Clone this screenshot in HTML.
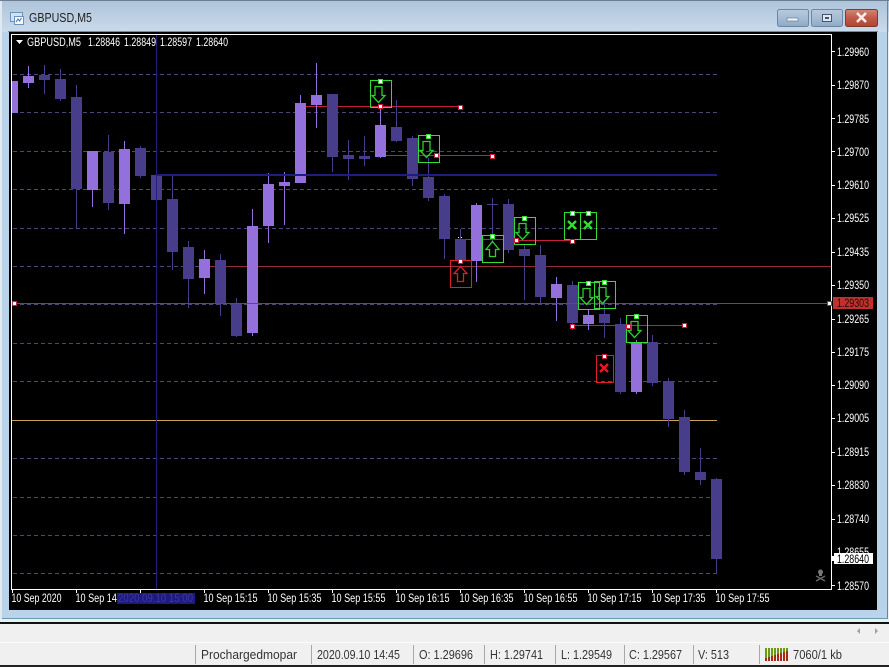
<!DOCTYPE html>
<html>
<head>
<meta charset="utf-8">
<title>GBPUSD,M5</title>
<style>
html,body{margin:0;padding:0;background:#f0f0f0;width:889px;height:667px;overflow:hidden}
svg{display:block}
text{font-family:"Liberation Sans",sans-serif;font-size:11.5px;fill:#fff}
.s{shape-rendering:crispEdges}
.l{fill:#9370db}
.d{fill:#483d8b}
.st text{fill:#333;font-size:12.5px}
.h{fill:#fff;stroke-width:1}
.hg{stroke:#33e033}
.hr{stroke:#c81e3c}
.bg{fill:none;stroke:#33dc33}
.br{fill:none;stroke:#dc1f2a}
.ag{fill:none;stroke:#2cd02c;stroke-width:1.300}
.ar{fill:none;stroke:#dc1f2a;stroke-width:1.300}
</style>
</head>
<body>
<svg width="889" height="667" viewBox="0 0 889 667" xmlns="http://www.w3.org/2000/svg">
<defs>
<linearGradient id="tb" x1="0" y1="0" x2="0" y2="1"><stop offset="0" stop-color="#aec3d9"/><stop offset="1" stop-color="#c9dbec"/></linearGradient>
<linearGradient id="btn" x1="0" y1="0" x2="0" y2="1"><stop offset="0" stop-color="#b9cadc"/><stop offset=".5" stop-color="#a5bcd4"/><stop offset="1" stop-color="#8fa9c6"/></linearGradient>
<linearGradient id="cls" x1="0" y1="0" x2="0" y2="1"><stop offset="0" stop-color="#d08678"/><stop offset=".5" stop-color="#c05a48"/><stop offset="1" stop-color="#b04432"/></linearGradient>
</defs>

<!-- window chrome -->
<g class="s">
<rect x="0" y="0" width="889" height="667" fill="#f0f0f0"/>
<rect x="0" y="0" width="889" height="32" fill="url(#tb)"/>
<rect x="0" y="0" width="889" height="1" fill="#6c7f92"/>
<rect x="0" y="1" width="2" height="618" fill="#dfe9f2"/>
<rect x="2" y="32" width="7" height="586" fill="#b8d2ea"/>
<rect x="877" y="32" width="10" height="586" fill="#b8d2ea"/>
<rect x="887" y="1" width="1" height="618" fill="#5f8a9e"/>
<rect x="2" y="610" width="885" height="8" fill="#b9d3ea"/>
<rect x="2" y="618" width="886" height="1" fill="#6a9bab"/>
<rect x="0" y="619" width="889" height="3" fill="#e8f0f5"/>
<rect x="0" y="622" width="889" height="2" fill="#111"/>
<rect x="0" y="642" width="889" height="1" fill="#fbfbfb"/>
<rect x="0" y="665" width="889" height="2" fill="#222"/>
<rect x="8" y="31" width="870" height="1" fill="#7c8894"/>
<rect x="9" y="32" width="868" height="578" fill="#000"/>
</g>

<!-- title icon -->
<g class="s">
<rect x="10.500" y="12.500" width="12" height="9" fill="#cfe2f5" stroke="#6f93b8"/>
<rect x="14.500" y="16.500" width="9" height="8" fill="#f4f8fc" stroke="#6f93b8"/>
</g>
<path d="M16 22l2-3 1.500 2 2-3" fill="none" stroke="#4a76a8"/>
<text x="29" y="22" textLength="63" lengthAdjust="spacingAndGlyphs" style="fill:#222;font-size:12.500px">GBPUSD,M5</text>

<!-- window buttons -->
<rect x="777.500" y="9.500" width="31" height="17" rx="2" fill="url(#btn)" stroke="#6d86a3"/>
<rect x="787" y="18" width="11" height="3" fill="#eef3f8" stroke="#5d7088" stroke-width=".6"/>
<rect x="811.500" y="9.500" width="31" height="17" rx="2" fill="url(#btn)" stroke="#6d86a3"/>
<rect x="822.500" y="14.500" width="9" height="7" fill="#dde7f1" stroke="#45566b"/>
<rect x="825" y="17" width="4" height="2" fill="#45566b"/>
<rect x="845.500" y="9.500" width="32" height="17" rx="2" fill="url(#cls)" stroke="#7c3a30"/>
<path d="M857 13l9 9M866 13l-9 9" stroke="#f7eeee" stroke-width="2.600" fill="none"/>

<!-- chart frame -->
<g class="s">
<rect x="11" y="34" width="821" height="1" fill="#fff"/>
<rect x="11" y="34" width="1" height="556" fill="#fff"/>
<rect x="831" y="34" width="1" height="556" fill="#fff"/>
<rect x="11" y="589" width="821" height="1" fill="#fff"/>
</g>

<!-- grid -->
<g class="s" stroke="#4d4775" stroke-dasharray="4 3" fill="none">
<path d="M13 74.500H717M13 112.500H717M13 151.500H717M13 189.500H717M13 228.500H717M13 304.500H717M13 343.500H717M13 381.500H717M13 458.500H717M13 497.500H717M13 535.500H717M13 573.500H717M13 266.500H717"/>
</g>

<!-- background horizontal lines -->
<g class="s">
<rect x="210" y="266" width="621" height="1" fill="#9a2a40"/>
<rect x="12" y="420" width="705" height="1" fill="#c6a452"/>
</g>

<!-- trend lines behind candles -->
<g class="s" fill="#c81e3c">
<rect x="305" y="106" width="155" height="1"/>
<rect x="380" y="155" width="112" height="1"/>
<rect x="460" y="239" width="56" height="1"/>
<rect x="516" y="240" width="56" height="1"/>
<rect x="572" y="325" width="112" height="1"/>
</g>

<!-- candles light -->
<g class="s l">
<rect x="12" y="81" width="6" height="32"/>
<rect x="28" y="66" width="1" height="22"/><rect x="23" y="76" width="11" height="7"/>
<rect x="92" y="151" width="1" height="56"/><rect x="87" y="151" width="11" height="39"/>
<rect x="124" y="141" width="1" height="93"/><rect x="119" y="149" width="11" height="55"/>
<rect x="204" y="250" width="1" height="44"/><rect x="199" y="259" width="11" height="19"/>
<rect x="252" y="209" width="1" height="127"/><rect x="247" y="226" width="11" height="107"/>
<rect x="268" y="173" width="1" height="70"/><rect x="263" y="184" width="11" height="42"/>
<rect x="284" y="172" width="1" height="53"/><rect x="279" y="182" width="11" height="4"/>
<rect x="300" y="95" width="1" height="88"/><rect x="295" y="103" width="11" height="80"/>
<rect x="316" y="63" width="1" height="65"/><rect x="311" y="95" width="11" height="10"/>
<rect x="380" y="106" width="1" height="52"/><rect x="375" y="125" width="11" height="32"/>
<rect x="476" y="203" width="1" height="79"/><rect x="471" y="205" width="11" height="56"/>
<rect x="556" y="277" width="1" height="44"/><rect x="551" y="284" width="11" height="14"/>
<rect x="588" y="309" width="1" height="21"/><rect x="583" y="315" width="11" height="9"/>
<rect x="636" y="340" width="1" height="54"/><rect x="631" y="342" width="11" height="50"/>
</g>
<g class="s d">
<rect x="44" y="65" width="1" height="29"/><rect x="39" y="75" width="11" height="5"/>
<rect x="60" y="69" width="1" height="32"/><rect x="55" y="79" width="11" height="20"/>
<rect x="76" y="85" width="1" height="143"/><rect x="71" y="97" width="11" height="92"/>
<rect x="108" y="135" width="1" height="75"/><rect x="103" y="152" width="11" height="51"/>
<rect x="140" y="146" width="1" height="32"/><rect x="135" y="148" width="11" height="28"/>
<rect x="151" y="175" width="11" height="25"/>
<rect x="172" y="176" width="1" height="94"/><rect x="167" y="199" width="11" height="53"/>
<rect x="188" y="241" width="1" height="67"/><rect x="183" y="247" width="11" height="32"/>
<rect x="220" y="254" width="1" height="62"/><rect x="215" y="260" width="11" height="44"/>
<rect x="236" y="298" width="1" height="39"/><rect x="231" y="303" width="11" height="33"/>
<rect x="332" y="94" width="1" height="78"/><rect x="327" y="94" width="11" height="63"/>
<rect x="348" y="140" width="1" height="40"/><rect x="343" y="155" width="11" height="4"/>
<rect x="364" y="136" width="1" height="30"/><rect x="359" y="156" width="11" height="3"/>
<rect x="396" y="100" width="1" height="42"/><rect x="391" y="127" width="11" height="14"/>
<rect x="412" y="136" width="1" height="50"/><rect x="407" y="138" width="11" height="41"/>
<rect x="428" y="158" width="1" height="43"/><rect x="423" y="177" width="11" height="21"/>
<rect x="444" y="194" width="1" height="65"/><rect x="439" y="196" width="11" height="43"/>
<rect x="460" y="229" width="1" height="33"/><rect x="455" y="239" width="11" height="21"/>
<rect x="492" y="198" width="1" height="45"/><rect x="487" y="204" width="11" height="1"/>
<rect x="508" y="199" width="1" height="54"/><rect x="503" y="204" width="11" height="46"/>
<rect x="524" y="244" width="1" height="56"/><rect x="519" y="249" width="11" height="7"/>
<rect x="540" y="245" width="1" height="60"/><rect x="535" y="255" width="11" height="42"/>
<rect x="572" y="281" width="1" height="49"/><rect x="567" y="285" width="11" height="38"/>
<rect x="604" y="300" width="1" height="38"/><rect x="599" y="314" width="11" height="9"/>
<rect x="620" y="318" width="1" height="76"/><rect x="615" y="324" width="11" height="68"/>
<rect x="652" y="335" width="1" height="51"/><rect x="647" y="342" width="11" height="41"/>
<rect x="668" y="378" width="1" height="49"/><rect x="663" y="381" width="11" height="38"/>
<rect x="684" y="410" width="1" height="65"/><rect x="679" y="417" width="11" height="55"/>
<rect x="700" y="448" width="1" height="37"/><rect x="695" y="472" width="11" height="8"/>
<rect x="716" y="478" width="1" height="96"/><rect x="711" y="479" width="11" height="80"/>
</g>

<!-- crosshair and overlay lines -->
<g class="s">
<rect x="156" y="35" width="1" height="554" fill="#241f7c"/>
<rect x="156" y="174" width="561" height="2" fill="#1e1e80"/>
<rect x="12" y="303" width="819" height="1" fill="#b42a3c"/>
</g>

<!-- signal boxes -->
<g class="s">
<rect x="370.500" y="80.500" width="21" height="27" class="bg"/>
<rect x="418.500" y="135.500" width="21" height="27" class="bg"/>
<rect x="482.500" y="235.500" width="21" height="27" class="bg"/>
<rect x="514.500" y="217.500" width="21" height="27" class="bg"/>
<rect x="564.500" y="212.500" width="16" height="27" class="bg"/>
<rect x="580.500" y="212.500" width="16" height="27" class="bg"/>
<rect x="578.500" y="282.500" width="21" height="27" class="bg"/>
<rect x="594.500" y="281.500" width="21" height="27" class="bg"/>
<rect x="626.500" y="315.500" width="21" height="27" class="bg"/>
<rect x="450.500" y="260.500" width="21" height="27" class="br"/>
<rect x="596.500" y="355.500" width="17" height="27" class="br"/>
</g>

<!-- arrows -->
<path class="ag" d="M375 86.500h7v9h3l-6.500 7-6.500-7h3z"/>
<path class="ag" d="M423 141.500h7v9h3l-6.500 7-6.500-7h3z"/>
<path class="ag" d="M519 223.500h7v9h3l-6.500 7-6.500-7h3z"/>
<path class="ag" d="M583 288.500h7v9h3l-6.500 7-6.500-7h3z"/>
<path class="ag" d="M599 287.500h7v9h3l-6.500 7-6.500-7h3z"/>
<path class="ag" d="M631 321.500h7v9h3l-6.500 7-6.500-7h3z"/>
<path class="ag" d="M489.500 256.500v-7h-3.500l6.500-8 6.500 8h-3.500v7z"/>
<path class="ar" d="M457.500 281.500v-8h-3.500l6.500-7 6.500 7h-3.500v8z"/>

<!-- crosses -->
<path d="M568 221l8 8M576 221l-8 8" stroke="#2ee02e" stroke-width="2.400" fill="none"/>
<path d="M584 221l8 8M592 221l-8 8" stroke="#2ee02e" stroke-width="2.400" fill="none"/>
<path d="M600 364l8 8M608 364l-8 8" stroke="#f0141e" stroke-width="2.400" fill="none"/>

<!-- handles -->
<g class="s">
<g class="h hg">
<rect x="378.500" y="79.500" width="4" height="4"/>
<rect x="426.500" y="134.500" width="4" height="4"/>
<rect x="490.500" y="234.500" width="4" height="4"/>
<rect x="522.500" y="216.500" width="4" height="4"/>
<rect x="570.500" y="211.500" width="4" height="4"/>
<rect x="586.500" y="211.500" width="4" height="4"/>
<rect x="586.500" y="281.500" width="4" height="4"/>
<rect x="602.500" y="280.500" width="4" height="4"/>
<rect x="634.500" y="314.500" width="4" height="4"/>
</g>
<g class="h hr">
<rect x="378.500" y="104.500" width="4" height="4"/>
<rect x="458.500" y="105.500" width="4" height="4"/>
<rect x="434.500" y="153.500" width="4" height="4"/>
<rect x="490.500" y="154.500" width="4" height="4"/>
<rect x="514.500" y="238.500" width="4" height="4"/>
<rect x="570.500" y="239.500" width="4" height="4"/>
<rect x="570.500" y="324.500" width="4" height="4"/>
<rect x="626.500" y="324.500" width="4" height="4"/>
<rect x="682.500" y="323.500" width="4" height="4"/>
<rect x="458.500" y="259.500" width="4" height="4"/>
<rect x="602.500" y="354.500" width="4" height="4"/>
<rect x="12.500" y="301.500" width="4" height="4"/>
<rect x="827.500" y="301.500" width="4" height="4"/>
</g>
<rect x="458" y="237" width="1" height="1" fill="#fff"/>
<rect x="461" y="237" width="1" height="1" fill="#fff"/>
</g>

<!-- chart header -->
<path d="M16 40h7l-3.500 4z" fill="#fff"/>
<text x="27" y="46" textLength="54" lengthAdjust="spacingAndGlyphs">GBPUSD,M5</text>
<text x="88" y="46" textLength="32" lengthAdjust="spacingAndGlyphs">1.28846</text>
<text x="124" y="46" textLength="32" lengthAdjust="spacingAndGlyphs">1.28849</text>
<text x="160" y="46" textLength="32" lengthAdjust="spacingAndGlyphs">1.28597</text>
<text x="196" y="46" textLength="32" lengthAdjust="spacingAndGlyphs">1.28640</text>

<!-- price axis -->
<g class="s" fill="#fff">
<rect x="832" y="51" width="3" height="1"/><rect x="832" y="85" width="3" height="1"/><rect x="832" y="118" width="3" height="1"/><rect x="832" y="151" width="3" height="1"/><rect x="832" y="185" width="3" height="1"/><rect x="832" y="218" width="3" height="1"/><rect x="832" y="252" width="3" height="1"/><rect x="832" y="285" width="3" height="1"/><rect x="832" y="319" width="3" height="1"/><rect x="832" y="352" width="3" height="1"/><rect x="832" y="385" width="3" height="1"/><rect x="832" y="418" width="3" height="1"/><rect x="832" y="452" width="3" height="1"/><rect x="832" y="485" width="3" height="1"/><rect x="832" y="519" width="3" height="1"/><rect x="832" y="585" width="3" height="1"/>
</g>
<g>
<text x="837" y="56" textLength="32" lengthAdjust="spacingAndGlyphs">1.29960</text>
<text x="837" y="89" textLength="32" lengthAdjust="spacingAndGlyphs">1.29870</text>
<text x="837" y="123" textLength="32" lengthAdjust="spacingAndGlyphs">1.29785</text>
<text x="837" y="156" textLength="32" lengthAdjust="spacingAndGlyphs">1.29700</text>
<text x="837" y="189" textLength="32" lengthAdjust="spacingAndGlyphs">1.29610</text>
<text x="837" y="222" textLength="32" lengthAdjust="spacingAndGlyphs">1.29525</text>
<text x="837" y="256" textLength="32" lengthAdjust="spacingAndGlyphs">1.29435</text>
<text x="837" y="289" textLength="32" lengthAdjust="spacingAndGlyphs">1.29350</text>
<text x="837" y="323" textLength="32" lengthAdjust="spacingAndGlyphs">1.29265</text>
<text x="837" y="356" textLength="32" lengthAdjust="spacingAndGlyphs">1.29175</text>
<text x="837" y="389" textLength="32" lengthAdjust="spacingAndGlyphs">1.29090</text>
<text x="837" y="422" textLength="32" lengthAdjust="spacingAndGlyphs">1.29005</text>
<text x="837" y="456" textLength="32" lengthAdjust="spacingAndGlyphs">1.28915</text>
<text x="837" y="489" textLength="32" lengthAdjust="spacingAndGlyphs">1.28830</text>
<text x="837" y="523" textLength="32" lengthAdjust="spacingAndGlyphs">1.28740</text>
<text x="837" y="556" textLength="32" lengthAdjust="spacingAndGlyphs">1.28655</text>
<text x="837" y="590" textLength="32" lengthAdjust="spacingAndGlyphs">1.28570</text>
</g>
<rect class="s" x="833" y="297" width="40" height="12" fill="#c0302e"/>
<text x="837" y="307" textLength="32" lengthAdjust="spacingAndGlyphs" style="fill:#2a0a0a">1.29303</text>
<rect class="s" x="834" y="553" width="39" height="11" fill="#fff"/>
<rect class="s" x="832" y="556" width="2" height="5" fill="#fff"/>
<text x="837" y="563" textLength="32" lengthAdjust="spacingAndGlyphs" style="fill:#000">1.28640</text>

<!-- skull -->
<circle cx="820.500" cy="572" r="2.500" fill="#777"/>
<rect class="s" x="819" y="574" width="3" height="2" fill="#777"/>
<path d="M816 576l9 5M825 576l-9 5" stroke="#6a6a6a" stroke-width="1.300" fill="none"/>

<!-- time axis -->
<g class="s" fill="#fff">
<rect x="12" y="590" width="1" height="3"/><rect x="76" y="590" width="1" height="3"/><rect x="140" y="590" width="1" height="3"/><rect x="204" y="590" width="1" height="3"/><rect x="268" y="590" width="1" height="3"/><rect x="332" y="590" width="1" height="3"/><rect x="396" y="590" width="1" height="3"/><rect x="460" y="590" width="1" height="3"/><rect x="524" y="590" width="1" height="3"/><rect x="588" y="590" width="1" height="3"/><rect x="652" y="590" width="1" height="3"/><rect x="716" y="590" width="1" height="3"/>
</g>
<text x="11.500" y="602" textLength="50" lengthAdjust="spacingAndGlyphs">10 Sep 2020</text>
<text x="75.500" y="602" textLength="54" lengthAdjust="spacingAndGlyphs">10 Sep 14:55</text>
<rect class="s" x="117" y="593" width="78" height="11" fill="#1e1a80"/>
<text x="118" y="602" textLength="75" lengthAdjust="spacingAndGlyphs" style="fill:#3a3aa0">2020.09.10 15:00</text>
<text x="203.500" y="602" textLength="54" lengthAdjust="spacingAndGlyphs">10 Sep 15:15</text>
<text x="267.500" y="602" textLength="54" lengthAdjust="spacingAndGlyphs">10 Sep 15:35</text>
<text x="331.500" y="602" textLength="54" lengthAdjust="spacingAndGlyphs">10 Sep 15:55</text>
<text x="395.500" y="602" textLength="54" lengthAdjust="spacingAndGlyphs">10 Sep 16:15</text>
<text x="459.500" y="602" textLength="54" lengthAdjust="spacingAndGlyphs">10 Sep 16:35</text>
<text x="523.500" y="602" textLength="54" lengthAdjust="spacingAndGlyphs">10 Sep 16:55</text>
<text x="587.500" y="602" textLength="54" lengthAdjust="spacingAndGlyphs">10 Sep 17:15</text>
<text x="651.500" y="602" textLength="54" lengthAdjust="spacingAndGlyphs">10 Sep 17:35</text>
<text x="715.500" y="602" textLength="54" lengthAdjust="spacingAndGlyphs">10 Sep 17:55</text>

<!-- scroll arrows -->
<path d="M860 628v6l-3-3z" fill="#a0a0a0"/>
<path d="M875 628v6l3-3z" fill="#a0a0a0"/>

<!-- status bar -->
<g class="s" fill="#a8a8a8">
<rect x="195" y="645" width="1" height="19"/><rect x="311" y="645" width="1" height="19"/><rect x="413" y="645" width="1" height="19"/><rect x="484" y="645" width="1" height="19"/><rect x="555" y="645" width="1" height="19"/><rect x="624" y="645" width="1" height="19"/><rect x="693" y="645" width="1" height="19"/><rect x="759" y="645" width="1" height="19"/>
</g>
<g class="st">
<text x="201" y="659" textLength="96" lengthAdjust="spacingAndGlyphs">Prochargedmopar</text>
<text x="317" y="659" textLength="83" lengthAdjust="spacingAndGlyphs">2020.09.10 14:45</text>
<text x="419" y="659" textLength="54" lengthAdjust="spacingAndGlyphs">O: 1.29696</text>
<text x="490" y="659" textLength="53" lengthAdjust="spacingAndGlyphs">H: 1.29741</text>
<text x="561" y="659" textLength="51" lengthAdjust="spacingAndGlyphs">L: 1.29549</text>
<text x="629" y="659" textLength="53" lengthAdjust="spacingAndGlyphs">C: 1.29567</text>
<text x="698" y="659" textLength="31" lengthAdjust="spacingAndGlyphs">V: 513</text>
<text x="793" y="659" textLength="49" lengthAdjust="spacingAndGlyphs">7060/1 kb</text>
</g>

<!-- connection bars -->
<g class="s">
<rect x="765" y="648" width="2" height="13" fill="#6a9a10"/>
<rect x="768" y="648" width="2" height="13" fill="#6a9a10"/>
<rect x="771" y="648" width="2" height="13" fill="#6a9a10"/>
<rect x="774" y="648" width="2" height="13" fill="#6a9a10"/>
<rect x="777" y="648" width="2" height="13" fill="#6a9a10"/>
<rect x="780" y="648" width="2" height="13" fill="#6a9a10"/>
<rect x="783" y="648" width="2" height="13" fill="#6a9a10"/>
<rect x="786" y="648" width="2" height="13" fill="#6a9a10"/>
<rect x="765" y="658" width="2" height="3" fill="#a82a10"/>
<rect x="768" y="657" width="2" height="4" fill="#a82a10"/>
<rect x="771" y="656" width="2" height="5" fill="#a82a10"/>
<rect x="774" y="655" width="2" height="6" fill="#a82a10"/>
<rect x="777" y="654" width="2" height="7" fill="#a82a10"/>
<rect x="780" y="653" width="2" height="8" fill="#a82a10"/>
<rect x="783" y="652" width="2" height="9" fill="#a82a10"/>
<rect x="786" y="651" width="2" height="10" fill="#a82a10"/>
</g>
</svg>
</body>
</html>
